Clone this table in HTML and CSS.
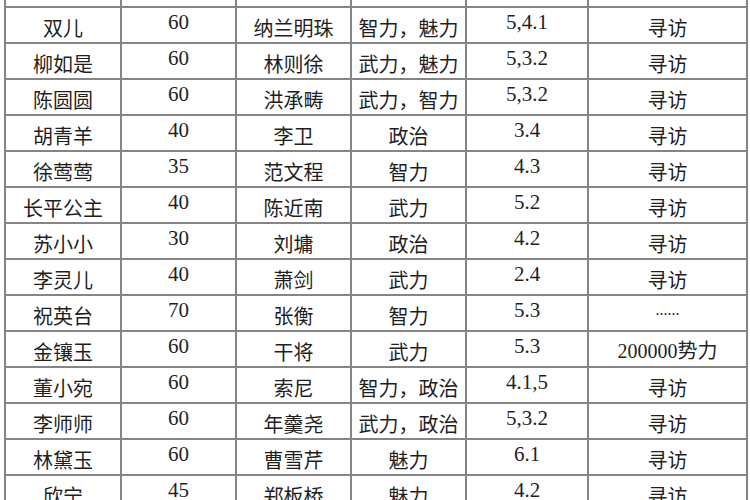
FILE: index.html
```html
<!DOCTYPE html>
<html lang="zh">
<head>
<meta charset="utf-8">
<link rel="stylesheet" href="styles.css">
</head>
<body>
<table class="grid">
  <colgroup>
    <col class="c1"><col class="c2"><col class="c3"><col class="c4"><col class="c5"><col class="c6">
  </colgroup>
  <tbody>
    <tr class="cut"><td></td><td></td><td></td><td></td><td></td><td></td></tr>
    <tr><td>双儿</td><td class="n">60</td><td>纳兰明珠</td><td>智力，魅力</td><td class="n">5,4.1</td><td>寻访</td></tr>
    <tr><td>柳如是</td><td class="n">60</td><td>林则徐</td><td>武力，魅力</td><td class="n">5,3.2</td><td>寻访</td></tr>
    <tr><td>陈圆圆</td><td class="n">60</td><td>洪承畴</td><td>武力，智力</td><td class="n">5,3.2</td><td>寻访</td></tr>
    <tr><td>胡青羊</td><td class="n">40</td><td>李卫</td><td>政治</td><td class="n">3.4</td><td>寻访</td></tr>
    <tr><td>徐莺莺</td><td class="n">35</td><td>范文程</td><td>智力</td><td class="n">4.3</td><td>寻访</td></tr>
    <tr><td>长平公主</td><td class="n">40</td><td>陈近南</td><td>武力</td><td class="n">5.2</td><td>寻访</td></tr>
    <tr><td>苏小小</td><td class="n">30</td><td>刘墉</td><td>政治</td><td class="n">4.2</td><td>寻访</td></tr>
    <tr><td>李灵儿</td><td class="n">40</td><td>萧剑</td><td>武力</td><td class="n">2.4</td><td>寻访</td></tr>
    <tr><td>祝英台</td><td class="n">70</td><td>张衡</td><td>智力</td><td class="n">5.3</td><td class="n dots">......</td></tr>
    <tr><td>金镶玉</td><td class="n">60</td><td>干将</td><td>武力</td><td class="n">5.3</td><td class="mix"><span class="num">200000</span>势力</td></tr>
    <tr><td>董小宛</td><td class="n">60</td><td>索尼</td><td>智力，政治</td><td class="n">4.1,5</td><td>寻访</td></tr>
    <tr><td>李师师</td><td class="n">60</td><td>年羹尧</td><td>武力，政治</td><td class="n">5,3.2</td><td>寻访</td></tr>
    <tr><td>林黛玉</td><td class="n">60</td><td>曹雪芹</td><td>魅力</td><td class="n">6.1</td><td>寻访</td></tr>
    <tr><td>欣宁</td><td class="n">45</td><td>郑板桥</td><td>魅力</td><td class="n">4.2</td><td>寻访</td></tr>
  </tbody>
</table>
</body>
</html>
```

FILE: styles.css
```css
html, body {
  margin: 0;
  padding: 0;
  background: #ffffff;
  overflow: hidden;
}

.grid {
  margin: -30px 0 0 4px;
  width: 742px;
  table-layout: fixed;
  border-collapse: collapse;
  font-family: "Noto Sans CJK SC", "Liberation Sans", sans-serif;
  font-size: 20px;
  color: #1f1f1f;
}

.c1 { width: 116px; }
.c2 { width: 115px; }
.c3 { width: 115px; }
.c4 { width: 115px; }
.c5 { width: 122px; }
.c6 { width: 159px; }

.grid tr {
  height: 36px;
}

.grid td {
  border: 2px solid #858585;
  padding: 6px 0 0 0;
  text-align: center;
  vertical-align: middle;
  white-space: nowrap;
  line-height: 26px;
}

.grid td.n {
  font-family: "Liberation Serif", serif;
  font-size: 21px;
  padding: 0 0 6px 0;
}

.grid td.dots {
  font-size: 16px;
}

.grid td.mix {
  padding: 2px 0 0 0;
}

.grid td.mix .num {
  font-family: "Liberation Serif", serif;
  font-size: 20px;
}
```
